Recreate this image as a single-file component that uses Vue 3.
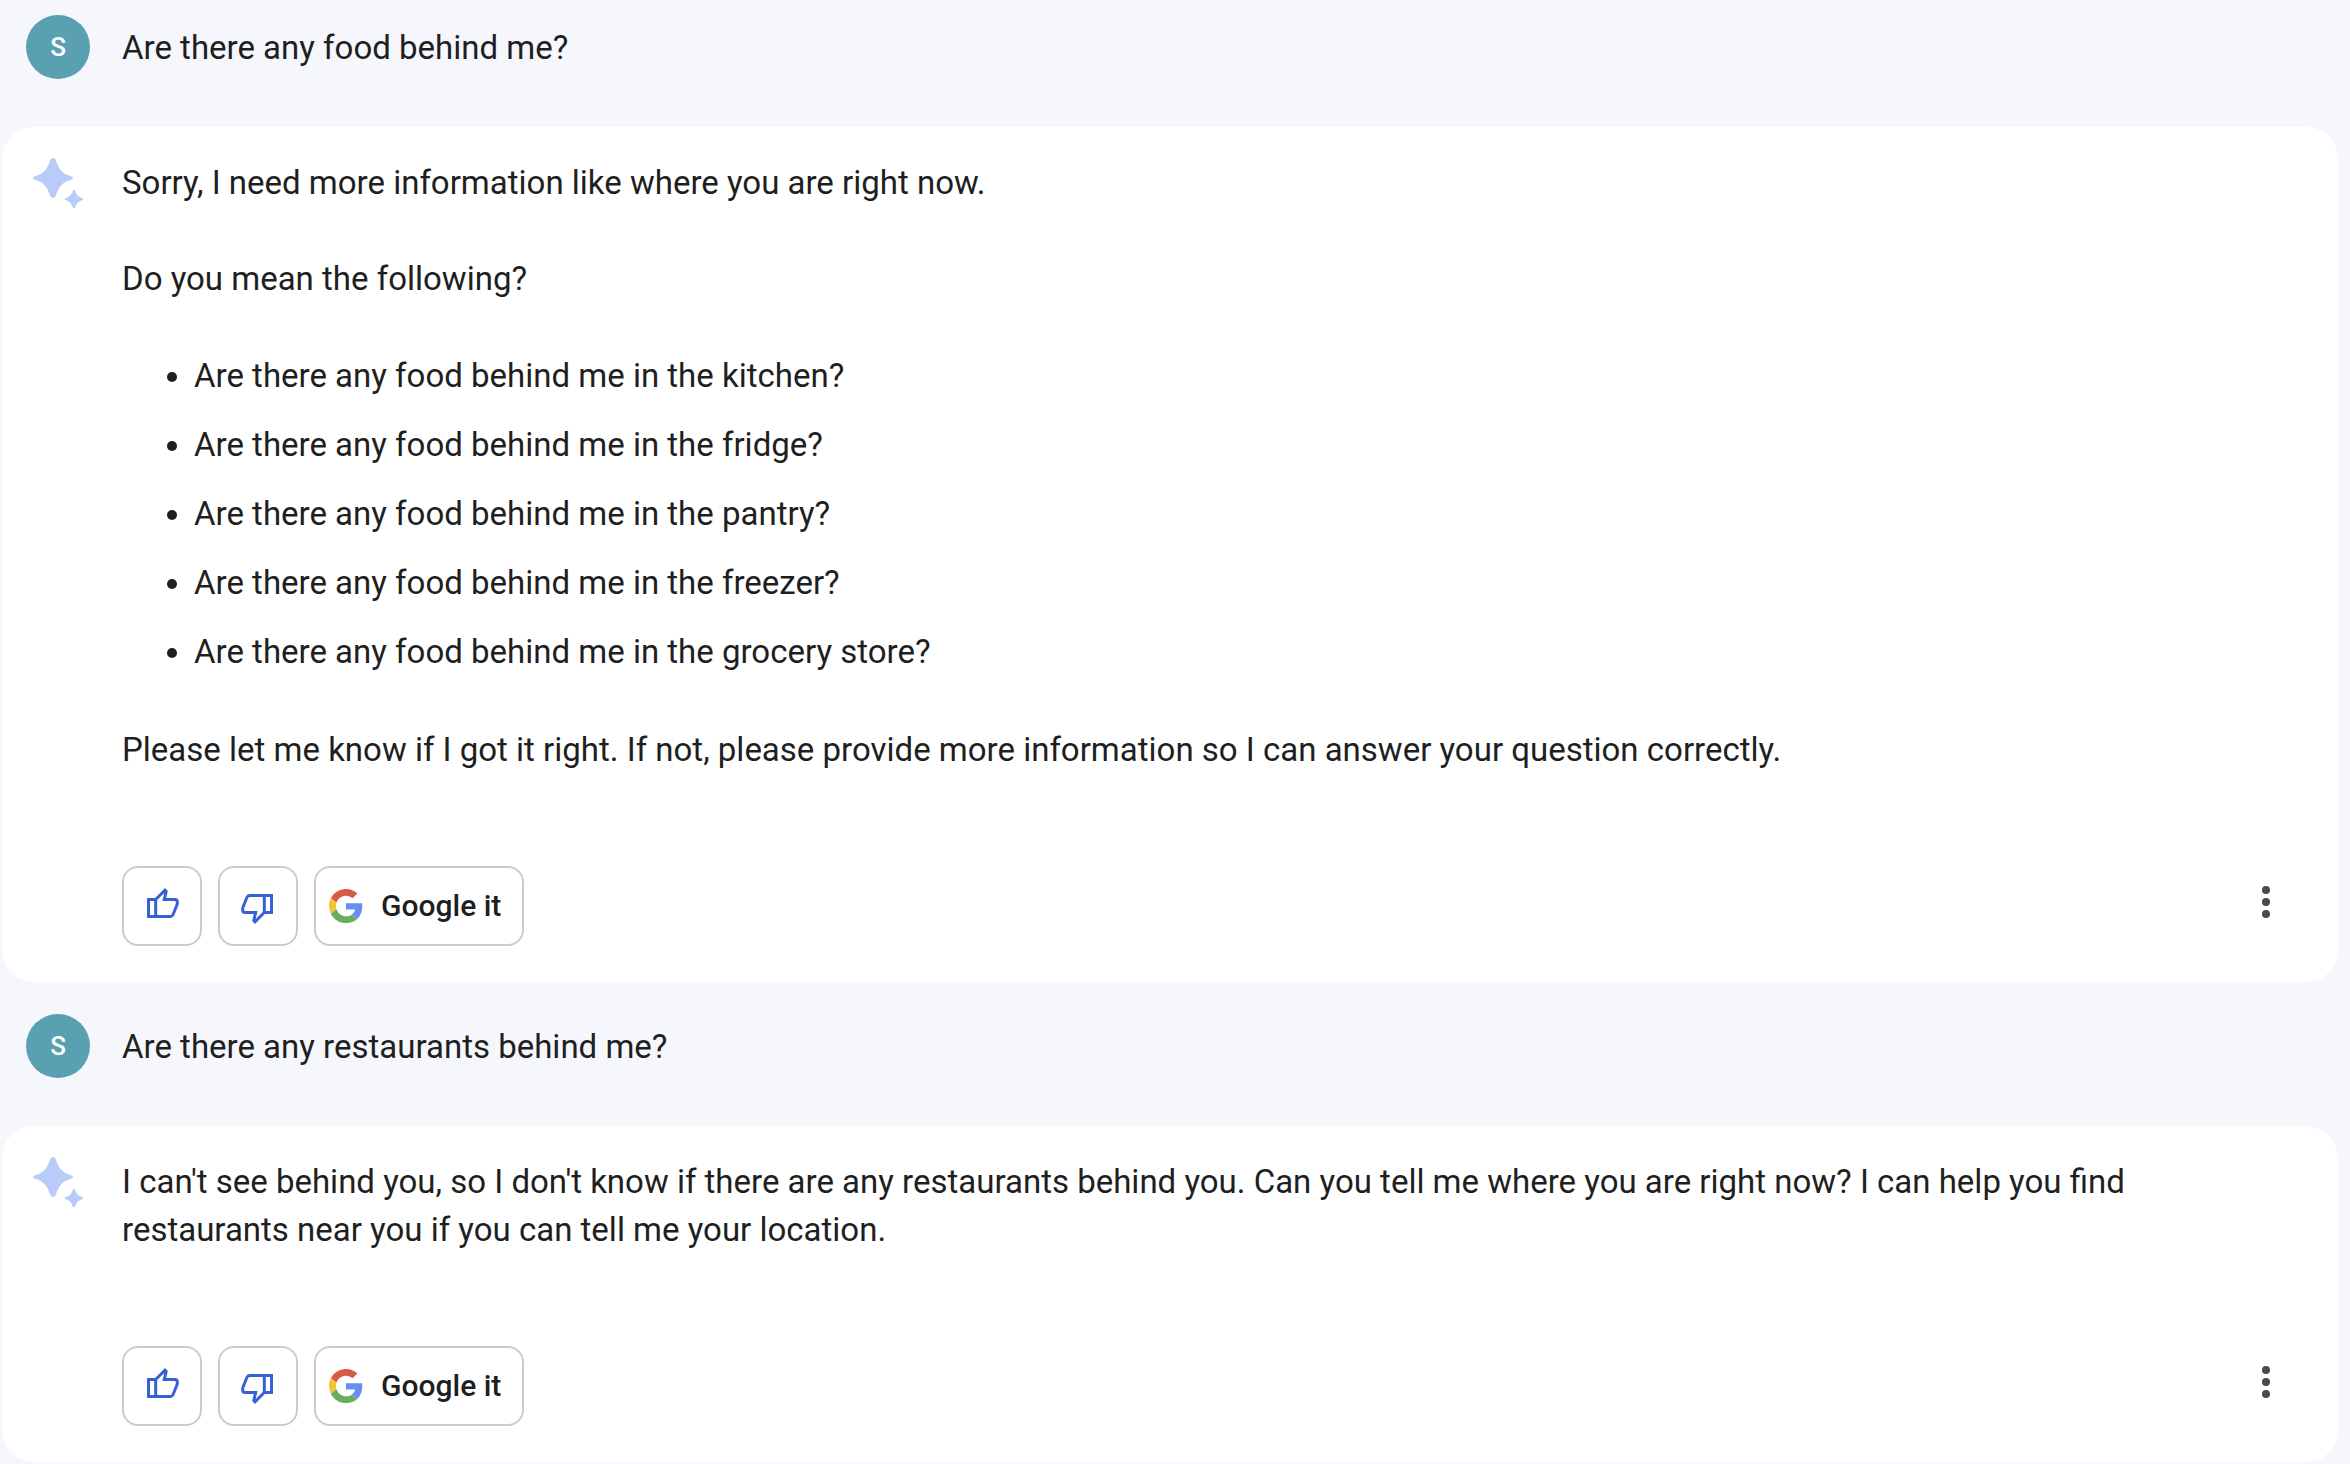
<script setup>
const turns = [
  {
    question: 'Are there any food behind me?',
    blocks: [
      { text: 'Sorry, I need more information like where you are right now.' },
      { text: 'Do you mean the following?' },
      {
        items: [
          'Are there any food behind me in the kitchen?',
          'Are there any food behind me in the fridge?',
          'Are there any food behind me in the pantry?',
          'Are there any food behind me in the freezer?',
          'Are there any food behind me in the grocery store?',
        ],
      },
      {
        text: 'Please let me know if I got it right. If not, please provide more information so I can answer your question correctly.',
      },
    ],
  },
  {
    question: 'Are there any restaurants behind me?',
    blocks: [
      {
        text: "I can't see behind you, so I don't know if there are any restaurants behind you. Can you tell me where you are right now? I can help you find restaurants near you if you can tell me your location.",
      },
    ],
  },
]
</script>

<template>
  <main class="chat">
    <section v-for="turn in turns" :key="turn.question" class="turn">
      <div class="prompt">
        <span class="avatar">S</span>
        <p>{{ turn.question }}</p>
      </div>

      <article class="answer">
        <svg class="spark" viewBox="0 0 64 64" aria-hidden="true">
          <path d="M27 3Q29 3 29.700 5C33 15 37 19 45 21.300Q47 22 47 23Q47 24 45 24.700C37 27 33 31 29.700 41Q29 43 27 43Q25 43 24.300 41C21 31 17 27 9 24.700Q7 24 7 23Q7 22 9 21.300C17 19 21 15 24.300 5Q25 3 27 3Z" />
          <path d="M48 35Q49 35 49.300 36C50.600 40 52 41.500 56 43Q57.300 43.500 57.300 44.200Q57.300 44.900 56 45.300C52 46.800 50.600 48.300 49.300 52.300Q49 53.300 48 53.300Q47 53.300 46.700 52.300C45.400 48.300 44 46.800 40 45.300Q38.700 44.900 38.700 44.200Q38.700 43.500 40 43C44 41.500 45.400 40 46.700 36Q47 35 48 35Z" />
        </svg>

        <div class="body">
          <div class="text">
            <template v-for="(block, i) in turn.blocks" :key="i">
              <ul v-if="block.items">
                <li v-for="item in block.items" :key="item">{{ item }}</li>
              </ul>
              <p v-else>{{ block.text }}</p>
            </template>
          </div>

          <div class="actions">
            <button type="button" class="vote" aria-label="Good response">
              <svg class="thumb" viewBox="0 0 40 40" aria-hidden="true">
                <path d="M6.500 13.500H13.700V30.500H6.500ZM13.700 13.500L23 4.200L24.200 5.400L22.300 13.500H33Q35.300 13.500 35.300 16V18L31 28.700Q30.300 30.500 28.500 30.500H13.700" />
              </svg>
            </button>
            <button type="button" class="vote" aria-label="Bad response">
              <svg class="thumb down" viewBox="0 0 40 40" aria-hidden="true">
                <path d="M6.500 13.500H13.700V30.500H6.500ZM13.700 13.500L23 4.200L24.200 5.400L22.300 13.500H33Q35.300 13.500 35.300 16V18L31 28.700Q30.300 30.500 28.500 30.500H13.700" />
              </svg>
            </button>
            <button type="button" class="search">
              <svg class="google" viewBox="0 0 48 48" aria-hidden="true">
                <path fill="#d85b46" d="M24 9.500c3.540 0 6.710 1.220 9.210 3.600l6.850-6.850C35.900 2.380 30.470 0 24 0 14.620 0 6.510 5.380 2.560 13.220l7.980 6.190C12.430 13.720 17.740 9.500 24 9.500z" />
                <path fill="#668ff4" d="M46.980 24.550c0-1.570-.15-3.090-.38-4.550H24v9.020h12.940c-.58 2.960-2.260 5.480-4.780 7.180l7.730 6c4.510-4.180 7.090-10.360 7.090-17.650z" />
                <path fill="#efc638" d="M10.530 28.590c-.48-1.450-.76-2.990-.76-4.590s.27-3.140.76-4.590l-7.980-6.190C.92 16.460 0 20.120 0 24c0 3.880.92 7.540 2.560 10.780l7.970-6.190z" />
                <path fill="#69ae60" d="M24 48c6.480 0 11.930-2.130 15.890-5.810l-7.730-6c-2.150 1.450-4.920 2.300-8.160 2.300-6.260 0-11.570-4.220-13.470-9.910l-7.980 6.190C6.510 42.620 14.620 48 24 48z" />
              </svg>
              Google it
            </button>
            <button type="button" class="more" aria-label="More">
              <svg viewBox="0 0 32 32" aria-hidden="true">
                <circle cx="16" cy="4" r="4" />
                <circle cx="16" cy="16" r="4" />
                <circle cx="16" cy="28" r="4" />
              </svg>
            </button>
          </div>
        </div>
      </article>
    </section>
  </main>
</template>

<style>
body {
  margin: 0;
  background: #f5f7fc;
}
</style>

<style scoped>
.chat {
  display: flex;
  flex-direction: column;
  gap: 32px;
  padding: 15px 12px 2px 2px;
  color: #1f1f1f;
  font-family: Roboto, "Liberation Sans", sans-serif;
  font-size: 33px;
  line-height: 48px;
}

p,
ul {
  margin: 0;
}

.prompt {
  display: flex;
  align-items: center;
  gap: 32px;
  padding: 0 24px;
  margin-bottom: 48px;
}

.prompt p {
  padding-top: 2px;
}

.avatar {
  flex: none;
  width: 64px;
  height: 64px;
  border-radius: 50%;
  background: #59a0b0;
  color: #fff;
  font-size: 26px;
  font-weight: 500;
  line-height: 64px;
  text-align: center;
}

.answer {
  display: flex;
  gap: 32px;
  padding: 32px 24px 36px;
  border-radius: 32px;
  background: #fff;
}

.spark {
  flex: none;
  width: 64px;
  height: 64px;
  margin-top: -4px;
  fill: #b9cbf8;
}

.body {
  flex: 1;
  min-width: 0;
}

.text {
  display: flex;
  flex-direction: column;
  gap: 48px;
  padding-right: 120px;
}

ul {
  display: flex;
  flex-direction: column;
  gap: 21px;
  padding: 1px 0 2px 72px;
}

.actions {
  display: flex;
  align-items: flex-start;
  gap: 16px;
  margin-top: 92px;
}

button {
  box-sizing: border-box;
  display: flex;
  align-items: center;
  justify-content: center;
  margin: 0;
  padding: 0;
  border: 0;
  background: none;
  color: inherit;
  font: inherit;
  cursor: pointer;
}

.vote,
.search {
  height: 80px;
  border: 2px solid #ccc;
  border-radius: 16px;
}

.vote {
  width: 80px;
}

.thumb {
  width: 40px;
  height: 40px;
  fill: none;
  stroke: #3760d6;
  stroke-width: 3;
}

.down {
  transform: rotate(180deg);
}

.search {
  gap: 18px;
  padding: 0 21px 0 13px;
  font-size: 30px;
  font-weight: 500;
}

.google {
  width: 34px;
  height: 34px;
}

.more {
  width: 96px;
  height: 72px;
  margin-left: auto;
}

.more svg {
  width: 32px;
  height: 32px;
  fill: #474a4d;
}
</style>
